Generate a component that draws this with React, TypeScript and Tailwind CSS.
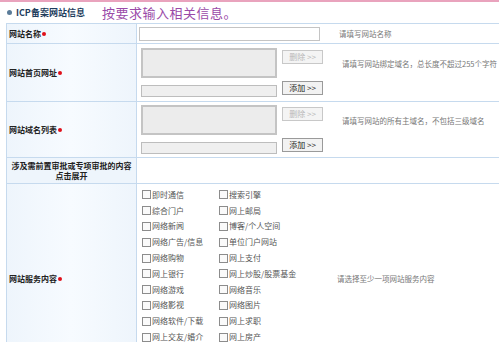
const font = { fontFamily: '"Noto Sans CJK SC", "Liberation Sans", sans-serif' };

const servicesLeft = ["即时通信", "综合门户", "网络新闻", "网络广告/信息", "网络购物", "网上银行", "网络游戏", "网络影视", "网络软件/下载", "网上交友/婚介"];
const servicesRight = ["搜索引擎", "网上邮局", "博客/个人空间", "单位门户网站", "网上支付", "网上炒股/股票基金", "网络音乐", "网络图片", "网上求职", "网上房产"];

function Label({ text, required }: { text: string; required?: boolean }) {
  return (
    <div className="w-[130px] shrink-0 flex items-center px-[2px] border-r border-[#c6daee] bg-gradient-to-r from-[#eef5fc] via-[#f7fbff] to-[#eef5fc]">
      <span className="flex items-center text-[8px] leading-none font-bold text-[#222]">
        {text}
        {required && <span className="w-[4px] h-[4px] rounded-full bg-[#e0101a] ml-[1px]" />}
      </span>
    </div>
  );
}

function Btn({ children, disabled }: { children: string; disabled?: boolean }) {
  return (
    <div
      className={
        "w-[41px] h-[14px] border flex items-center justify-center text-[8px] leading-none " +
        (disabled ? "border-[#c8c8c8] bg-[#f4f4f4] text-[#b8b8b8]" : "border-[#9a9a9a] bg-[#f2f2f2] text-[#222]")
      }
    >
      {children}
    </div>
  );
}

function ListField({ hint, topPad }: { hint: string; topPad: string }) {
  return (
    <div className={"flex-1 flex items-start pl-[4px] " + topPad}>
      <div className="flex flex-col gap-[7px]">
        <div className="w-[136px] h-[30px] border-2 border-[#c4c4c4] bg-[#ececec]" />
        <div className="w-[136px] h-[12px] border border-[#bdbdbd] bg-[#efefef]" />
      </div>
      <div className="flex flex-col justify-between h-[47px] ml-[5px] pt-[2px]">
        <Btn disabled>删除 &gt;&gt;</Btn>
        <Btn>添加 &gt;&gt;</Btn>
      </div>
      <div className="ml-[19px] mt-[12px] text-[7.5px] leading-none text-[#777] whitespace-nowrap">{hint}</div>
    </div>
  );
}

function Check({ text }: { text: string }) {
  return (
    <div className="flex items-center h-[15.8px] text-[8px] leading-none text-[#555] whitespace-nowrap">
      <span className="w-[9px] h-[9px] border border-[#8c8c8c] bg-[#fafafa] mr-[1px] shrink-0" />
      {text}
    </div>
  );
}

export default function App() {
  return (
    <div className="w-[499px] h-[342px] overflow-hidden bg-white border-t-2 border-[#e9a3bd]" style={font}>
      <div className="h-[21px] flex items-center pl-[7px]">
        <span className="w-[5px] h-[5px] rounded-full bg-[#5b7c99] mr-[4px]" />
        <span className="text-[9px] leading-none font-bold text-[#1d3c5c]">ICP备案网站信息</span>
        <span className="ml-[17px] text-[13px] leading-none text-[#9a4aa8] tracking-[0.5px]">按要求输入相关信息。</span>
      </div>

      <div className="ml-[6px] border-l border-t border-[#c6daee]">
        {/* 网站名称 */}
        <div className="flex h-[20px] border-b border-[#c6daee]">
          <Label text="网站名称" required />
          <div className="flex-1 flex items-center pl-[2px]">
            <div className="w-[181px] h-[14px] border border-[#c4c4c4] bg-white" />
            <span className="ml-[19px] text-[7.5px] leading-none text-[#777]">请填写网站名称</span>
          </div>
        </div>

        {/* 网站首页网址 */}
        <div className="flex h-[58px] border-b border-[#c6daee]">
          <Label text="网站首页网址" required />
          <ListField hint="请填写网站绑定域名，总长度不超过255个字符" topPad="pt-[4px]" />
        </div>

        {/* 网站域名列表 */}
        <div className="flex h-[56px] border-b border-[#c6daee]">
          <Label text="网站域名列表" required />
          <ListField hint="请填写网站的所有主域名，不包括三级域名" topPad="pt-[3px]" />
        </div>

        {/* 前置审批 */}
        <div className="flex h-[26px] border-b border-[#c6daee]">
          <div className="w-[130px] shrink-0 flex flex-col items-center justify-center gap-[2px] border-r border-[#c6daee] bg-[#eef5fc] text-[8px] leading-none font-bold text-[#222]">
            <span>涉及需前置审批或专项审批的内容</span>
            <span>点击展开</span>
          </div>
          <div className="flex-1" />
        </div>

        {/* 网站服务内容 */}
        <div className="flex h-[190px]">
          <Label text="网站服务内容" required />
          <div className="flex-1 flex items-start pl-[5px] pt-[3px]">
            <div className="flex flex-col w-[77px]">
              {servicesLeft.map((s) => (
                <Check key={s} text={s} />
              ))}
            </div>
            <div className="flex flex-col w-[118px]">
              {servicesRight.map((s) => (
                <Check key={s} text={s} />
              ))}
            </div>
            <div className="mt-[88px] text-[7.5px] leading-none text-[#777] whitespace-nowrap">请选择至少一项网站服务内容</div>
          </div>
        </div>
      </div>
    </div>
  );
}
